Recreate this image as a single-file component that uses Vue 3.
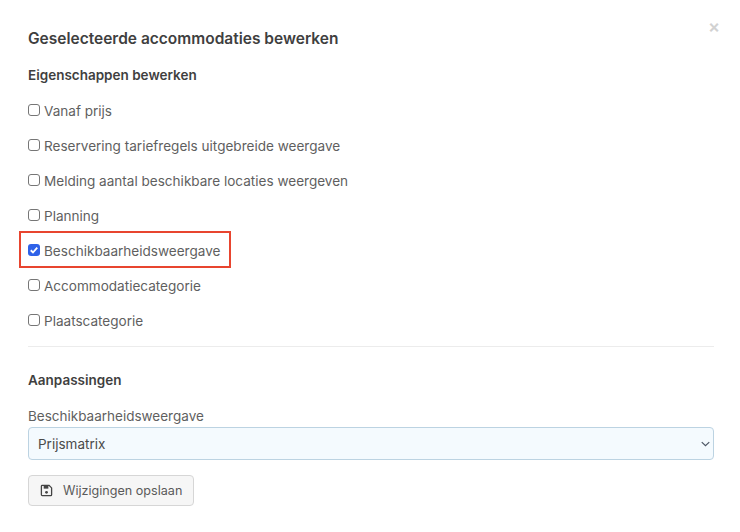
<script setup>
const options = [
  { label: 'Vanaf prijs', checked: false },
  { label: 'Reservering tariefregels uitgebreide weergave', checked: false },
  { label: 'Melding aantal beschikbare locaties weergeven', checked: false },
  { label: 'Planning', checked: false },
  { label: 'Beschikbaarheidsweergave', checked: true },
  { label: 'Accommodatiecategorie', checked: false },
  { label: 'Plaatscategorie', checked: false },
]
</script>

<template>
  <div class="modal">
    <span class="close">×</span>
    <h1 class="title">Geselecteerde accommodaties bewerken</h1>
    <h2 class="section first">Eigenschappen bewerken</h2>
    <ul class="options">
      <li v-for="o in options" :key="o.label" class="option">
        <span class="item" :class="{ marked: o.checked }">
          <span class="box" :class="{ on: o.checked }">
            <svg v-if="o.checked" viewBox="0 0 13 13" width="12" height="12">
              <path d="M3 6.8 L5.4 9.2 L10 4" fill="none" stroke="#fff" stroke-width="2" />
            </svg>
          </span>
          <span class="text">{{ o.label }}</span>
        </span>
      </li>
    </ul>
    <hr class="rule" />
    <h2 class="section">Aanpassingen</h2>
    <div class="field-label">Beschikbaarheidsweergave</div>
    <div class="select">
      <span>Prijsmatrix</span>
      <svg viewBox="0 0 12 8" width="9" height="6">
        <path d="M1 1.5 L6 6.2 L11 1.5" fill="none" stroke="#4b5563" stroke-width="1.6" />
      </svg>
    </div>
    <div class="button">
      <svg viewBox="0 0 14 14" width="13" height="13">
        <path d="M2.2 1.5 H9.8 L12.5 4.2 V11.5 A1 1 0 0 1 11.5 12.5 H2.5 A1 1 0 0 1 1.5 11.5 V2.5 A1 1 0 0 1 2.2 1.5 Z" fill="none" stroke="#444" stroke-width="1.4" />
        <path d="M4 2 H9 V5 H4 Z" fill="#444" />
        <circle cx="7" cy="9" r="1.5" fill="#444" />
      </svg>
      <span>Wijzigingen opslaan</span>
    </div>
  </div>
</template>

<style>
body { margin: 0; background: #fff; }
</style>

<style scoped>
.modal {
  position: relative;
  width: 740px;
  height: 532px;
  box-sizing: border-box;
  padding: 29px 26px 0 28px;
  font-family: Inter, "Liberation Sans", sans-serif;
  color: #3f3f3f;
  background: #fff;
  overflow: hidden;
}
.close {
  position: absolute;
  top: 17px;
  right: 20px;
  font-size: 18px;
  line-height: 20px;
  font-weight: 600;
  color: #d2d2d2;
}
.title {
  margin: 0;
  font-size: 15.5px;
  line-height: 20px;
  font-weight: 600;
}
.section {
  margin: 0;
  font-size: 13.5px;
  line-height: 18px;
  font-weight: 600;
}
.section.first { margin-top: 17px; }
.options {
  list-style: none;
  margin: 9.5px 0 0;
  padding: 0;
}
.option {
  height: 35px;
  display: flex;
  align-items: center;
}
.item {
  display: flex;
  align-items: center;
  gap: 4px;
  height: 33px;
}
.item.marked {
  position: relative;
  margin-left: -8px;
  padding: 0 10px 0 8px;
}
.item.marked::after {
  content: "";
  position: absolute;
  top: -3.5px;
  bottom: -0.5px;
  left: -1px;
  right: -1px;
  border: 2px solid #e8452f;
}
.box {
  width: 10px;
  height: 10px;
  border: 1px solid #767676;
  border-radius: 3px;
  background: #fff;
  display: flex;
  align-items: center;
  justify-content: center;
  margin-top: -2px;
}
.box.on {
  width: 12px;
  height: 12px;
  border: none;
  background: #2f62e8;
}
.text {
  font-size: 13.55px;
  line-height: 18px;
  color: #5f5f5f;
}
.rule {
  margin: 7.5px 0 0;
  border: none;
  border-top: 1px solid #ececec;
}
.rule + .section { margin-top: 24px; }
.field-label {
  margin-top: 18px;
  font-size: 13.5px;
  line-height: 18px;
  color: #5f5f5f;
}
.select {
  margin-top: 2px;
  height: 33px;
  box-sizing: border-box;
  border: 1px solid #bcd3e2;
  border-radius: 4px;
  background: #f4fafe;
  padding: 0 3px 0 9px;
  display: flex;
  align-items: center;
  justify-content: space-between;
  font-size: 13.5px;
  color: #4a4a4a;
}
.button {
  margin-top: 15px;
  width: 166px;
  height: 31px;
  box-sizing: border-box;
  border: 1px solid #d6d6d6;
  border-radius: 4px;
  background: #f6f6f6;
  display: flex;
  align-items: center;
  gap: 10px;
  padding-left: 11px;
  font-size: 12.6px;
  color: #5a5a5a;
}
</style>
